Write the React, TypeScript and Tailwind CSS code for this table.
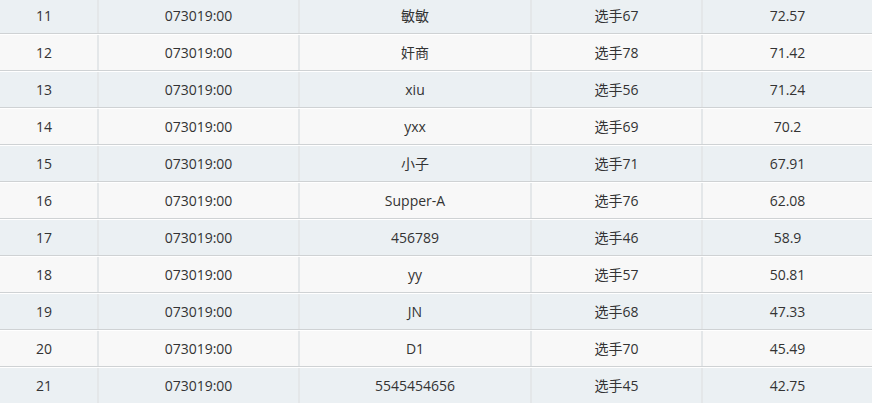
import React from "react";

const rows = [
  { no: 11, time: "073019:00", name: "敏敏", player: "选手67", score: "72.57" },
  { no: 12, time: "073019:00", name: "奸商", player: "选手78", score: "71.42" },
  { no: 13, time: "073019:00", name: "xiu", player: "选手56", score: "71.24" },
  { no: 14, time: "073019:00", name: "yxx", player: "选手69", score: "70.2" },
  { no: 15, time: "073019:00", name: "小子", player: "选手71", score: "67.91" },
  { no: 16, time: "073019:00", name: "Supper-A", player: "选手76", score: "62.08" },
  { no: 17, time: "073019:00", name: "456789", player: "选手46", score: "58.9" },
  { no: 18, time: "073019:00", name: "yy", player: "选手57", score: "50.81" },
  { no: 19, time: "073019:00", name: "JN", player: "选手68", score: "47.33" },
  { no: 20, time: "073019:00", name: "D1", player: "选手70", score: "45.49" },
  { no: 21, time: "073019:00", name: "5545454656", player: "选手45", score: "42.75" },
];

const App: React.FC = () => {
  return (
    <div
      className="w-[872px] h-[403px] overflow-hidden bg-[#f7f8f9] text-[14px] text-[#333]"
      style={{ fontFamily: '"Open Sans", "Noto Sans CJK SC", sans-serif' }}
    >
      <div className="-mt-[3px]">
        {rows.map((r, idx) => (
          <div
            key={r.no}
            className={
              "grid grid-cols-[97px_201px_232px_171px_171px] h-[37px] border-t border-t-white border-b border-b-[#cfd2d4] " +
              (idx % 2 === 0 ? "bg-[#ebf0f3]" : "bg-[#f8f8f8]")
            }
          >
            <div className="flex items-center justify-center pr-[9px]">{r.no}</div>
            <div className="flex items-center justify-center border-l-2 border-[#e4e7e9]">{r.time}</div>
            <div className="flex items-center justify-center border-l-2 border-[#e4e7e9]">{r.name}</div>
            <div className="flex items-center justify-center border-l-2 border-[#e4e7e9]">{r.player}</div>
            <div className="flex items-center justify-center border-l-2 border-[#e4e7e9]">{r.score}</div>
          </div>
        ))}
      </div>
    </div>
  );
};

export default App;
